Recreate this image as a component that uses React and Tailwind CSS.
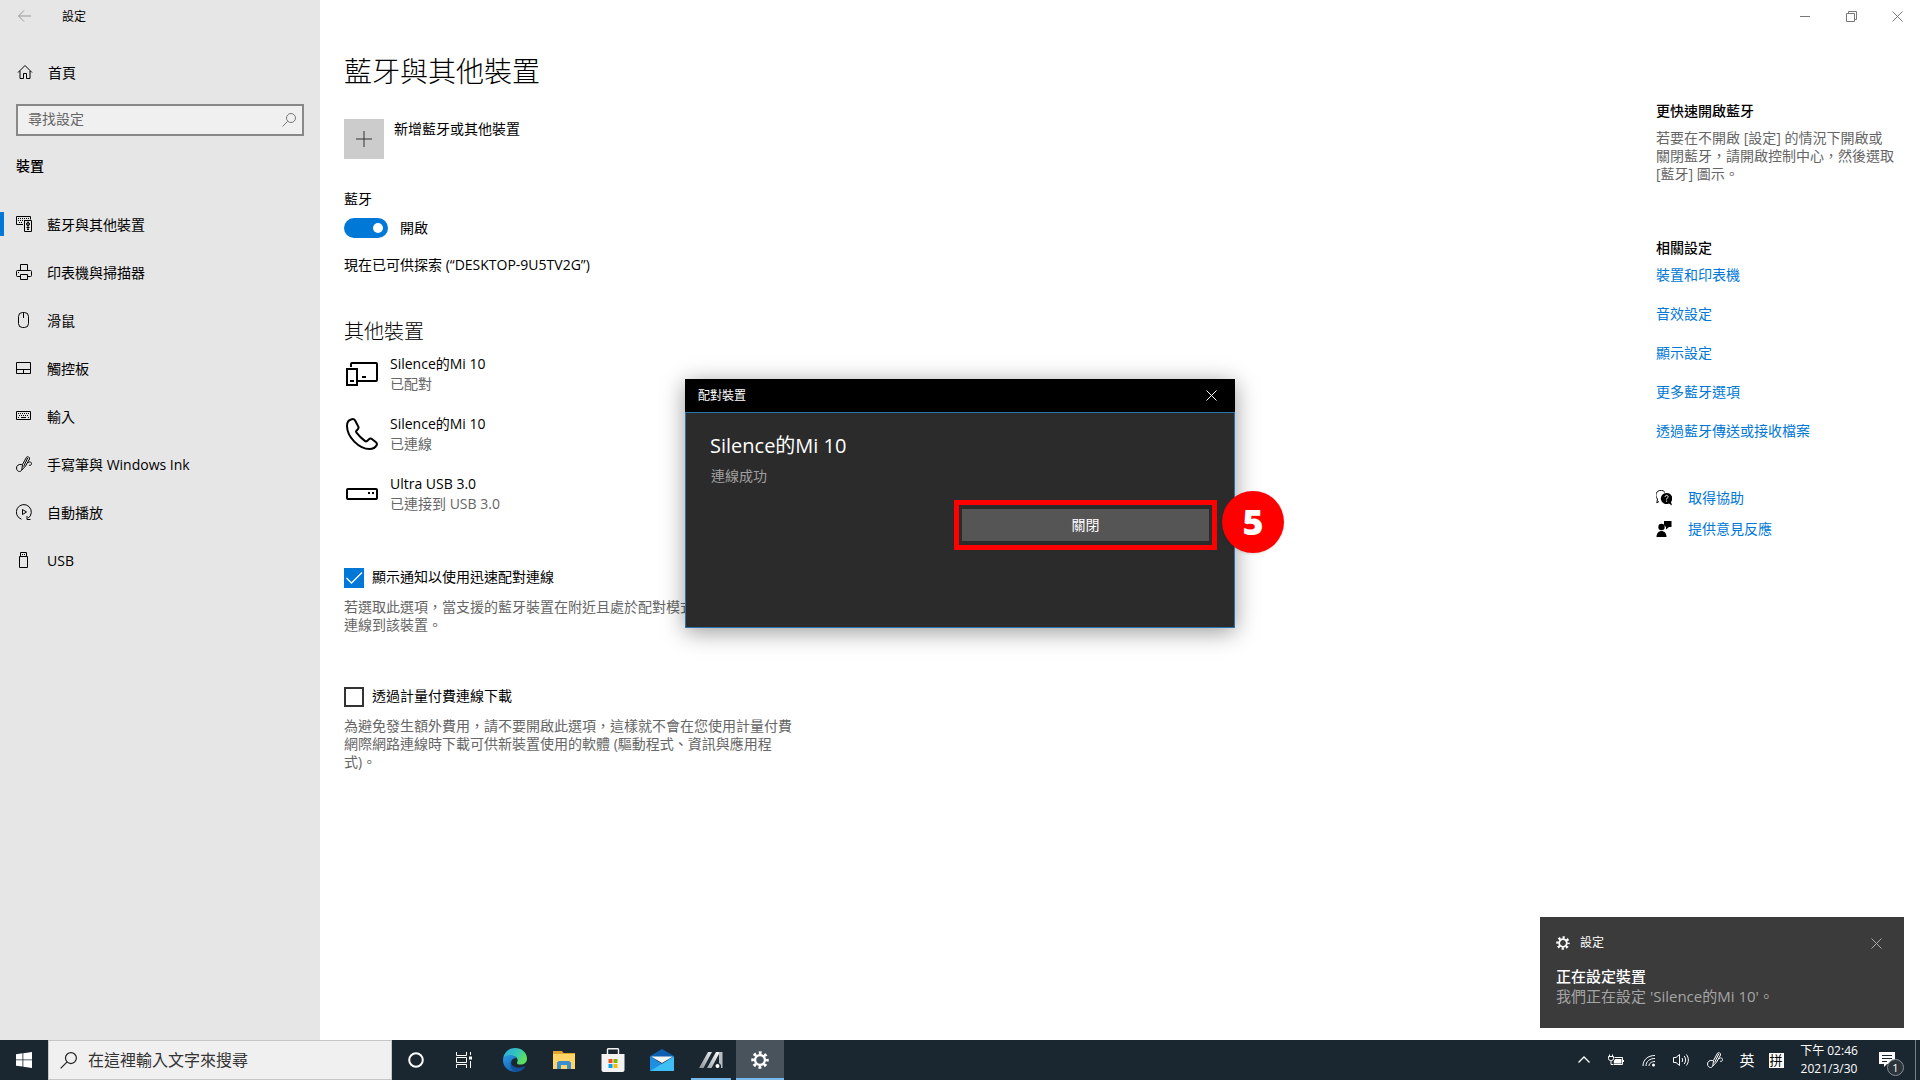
import { useState } from 'react'

const navItems = [
    { label: "藍牙與其他裝置", icon: DevicesIcon },
    { label: "印表機與掃描器", icon: PrinterIcon },
    { label: "滑鼠", icon: MouseIcon },
    { label: "觸控板", icon: TouchpadIcon },
    { label: "輸入", icon: KeyboardIcon },
    { label: "手寫筆與 Windows Ink", icon: PenIcon },
    { label: "自動播放", icon: AutoPlayIcon },
    { label: "USB", icon: UsbIcon },
];

const devices = [
    { name: "Silence的Mi 10", status: "已配對", icon: ScreensIcon },
    { name: "Silence的Mi 10", status: "已連線", icon: PhoneIcon },
    { name: "Ultra USB 3.0", status: "已連接到 USB 3.0", icon: DriveIcon },
];

const relatedLinks = ["裝置和印表機", "音效設定", "顯示設定", "更多藍牙選項", "透過藍牙傳送或接收檔案"];

function Icon({ size = 16, children, ...rest }) {
    return (
        <svg width={size} height={size} viewBox={`0 0 ${size} ${size}`} fill="none" stroke="currentColor" className="shrink-0" aria-hidden="true" {...rest}>
            {children}
        </svg>
    );
}

function DevicesIcon() {
    return (
        <Icon>
            <path d="M7 8.5H.5v-8h14v3" />
            <path d="M2 2.5h11M2 4.5h7M3 6.5h4" strokeDasharray="1 1" />
            <path d="M8.5 4.5h7v11h-7z" />
            <circle cx="12" cy="8" r="1.5" />
            <path d="M12 5.5v8M10.5 11.5h3M11 13.5h2" />
        </Icon>
    );
}

function PrinterIcon() {
    return (
        <Icon>
            <path d="M4.5 6V.5h7V6M4.5 12.500h-3a1 1 0 0 1-1-1V7.500a1 1 0 0 1 1-1h13a1 1 0 0 1 1 1v4a1 1 0 0 1-1 1h-3M4.500 10.500h7v5h-7z" />
            <path d="M2 8.500h1" />
        </Icon>
    );
}

function MouseIcon() {
    return (
        <Icon>
            <rect x="2.500" y=".5" width="10" height="15" rx="4" />
            <path d="M7.500 1v5" />
        </Icon>
    );
}

function TouchpadIcon() {
    return (
        <Icon>
            <path d="M.5 2.500h14v11H.5zM.5 9.500h14M7.500 9.500v4" />
        </Icon>
    );
}

function KeyboardIcon() {
    return (
        <Icon>
            <path d="M.5 3.500h14v8H.5z" />
            <path d="M2 5.500h11M3 7.500h10" strokeDasharray="1 1" />
            <path d="M2 9.500h1M5 9.500h5M12 9.500h1" />
        </Icon>
    );
}

function PenIcon() {
    return (
        <Icon>
            <path d="M10.500 1.200 6.500 8.500 5.800 14l3.800-4L13.500 3c.5-2-2-3-3-1.800zM11.800 1.800 7.600 10.500" />
            <path d="M5.800 8.500c-3-.6-5.300 1-5.300 3.500 0 2 1.400 3.500 3 3.500 1.200 0 2-.7 2.300-1.700M12 7c1.500-2 3.500-1 3.500.8 0 1.200-1.500 2.200-2.500 1.200" />
        </Icon>
    );
}

function AutoPlayIcon() {
    return (
        <Icon>
            <path d="M5.500 15.200A7.500 7.500 0 1 1 12 14.300M14.500 15.500h-3.500v-3.500" />
            <path d="M6.500 5.500v5l4-2.500z" />
        </Icon>
    );
}

function UsbIcon() {
    return (
        <Icon>
            <path d="M3.500 4.500h8v11h-8zM4.500 4.500v-4h6v4" />
            <path d="M6 2.500h1M8 2.500h1" />
        </Icon>
    );
}

function ScreensIcon() {
    return (
        <Icon size={32} strokeWidth="2">
            <path d="M5 9V6a1 1 0 0 1 1-1h24a1 1 0 0 1 1 1v16a1 1 0 0 1-1 1H12" />
            <path d="M1 11h10v16H1zM4 23h4M16 19h4" />
        </Icon>
    );
}

function PhoneIcon() {
    return (
        <Icon size={32} strokeWidth="2">
            <path d="M5 1.500C3 2 1 4.500 1 8c0 11 12 23 22.500 23 3.500 0 6-1.600 7.200-4 .5-1.200.3-2-.7-2.800l-3.800-3c-1.200-.9-2.400-.8-3.500.2l-1.600 1.500c-.8.7-1.500.6-2.300 0-3-2.200-6-5.200-8.300-8.200-.7-.9-.6-1.500.1-2.200l1-1c1-1 1.200-2.300.4-3.500L9 2.300C8.200 1.100 6.500.9 5 1.500z" />
        </Icon>
    );
}

function DriveIcon() {
    return (
        <Icon size={32} strokeWidth="2">
            <rect x="1" y="11" width="30" height="10" rx="1" />
            <path d="M22 15h2M26 15h2" />
        </Icon>
    );
}

function CloseIcon({ size = 11 }) {
    return (
        <Icon size={size} viewBox="0 0 11 11">
            <path d="m.5.5 10 10m0-10-10 10" />
        </Icon>
    );
}

function SearchIcon({ size = 14 }) {
    return (
        <Icon size={size} viewBox="0 0 14 14">
            <circle cx="9" cy="5" r="4.500" />
            <path d="M5.700 8.300.5 13.500" />
        </Icon>
    );
}

function GearIcon({ size = 14 }) {
    return (
        <Icon size={size} viewBox="0 0 20 20">
            <circle cx="10" cy="10" r="5.500" strokeWidth="2.600" />
            <circle cx="10" cy="10" r="8" strokeWidth="3.400" strokeDasharray="3.140 3.140" strokeDashoffset="1.570" />
        </Icon>
    );
}

function Sidebar() {
    return (
        <aside className="w-80 shrink-0 bg-[#e6e6e6]">
            <div className="flex h-8 items-center pl-4">
                <button className="w-[46px] pl-px text-[#999]" aria-label="返回">
                    <Icon>
                        <path d="M14 8H1.500M7 2.500 1.500 8 7 13.500" />
                    </Icon>
                </button>
                <span className="pt-0.5 text-xs">設定</span>
            </div>
            <a href="#home" className="mt-5 flex h-10 items-center gap-[15px] pl-[17px]">
                <Icon>
                    <path d="M1 8.500 8 1.500l7 7M3 7v7.500h3.500v-5h3v5H13V7" />
                </Icon>
                <span className="pt-px">首頁</span>
            </a>
            <div className="mx-4 mt-3 flex h-8 items-center border-2 border-[#888] bg-[#f0f0f0] pr-1.5 pl-[10px] text-[#777]">
                <input type="text" placeholder="尋找設定" aria-label="尋找設定" className="min-w-0 flex-1 pb-0.5 outline-none placeholder:text-[#666]" />
                <SearchIcon />
            </div>
            <h2 className="mt-5 pl-4 font-medium">裝置</h2>
            <nav className="mt-6">
                {navItems.map((item, i) => (
                    <a key={item.label} href="#nav" className="flex h-12 items-center">
                        <span className={i === 0 ? "h-6 w-1 bg-[#0078d7]" : "h-6 w-1"} />
                        <span className="mr-[15px] ml-3">
                            <item.icon />
                        </span>
                        <span className="pt-0.5">{item.label}</span>
                    </a>
                ))}
            </nav>
        </aside>
    );
}

function CheckOption({ label, defaultChecked, children }) {
    return (
        <div className="w-[456px]">
            <label className="flex items-center gap-2">
                <span className="grid">
                    <input
                        type="checkbox"
                        defaultChecked={defaultChecked}
                        className="peer col-start-1 row-start-1 size-5 appearance-none border-2 border-[#333] checked:border-[#0078d7] checked:bg-[#0078d7]"
                    />
                    <svg width="20" height="20" fill="none" stroke="white" strokeWidth="1.300" className="pointer-events-none invisible col-start-1 row-start-1 peer-checked:visible">
                        <path d="m2.500 10 5 5L18 4.500" />
                    </svg>
                </span>
                <span className="pb-0.5 leading-[18px]">{label}</span>
            </label>
            <p className="mt-[10px] leading-[18px] text-[#666]">{children}</p>
        </div>
    );
}

function MainContent() {
    const [bluetooth, setBluetooth] = useState(true);

    return (
        <main className="flex-1 pt-[53px] pl-6">
            <h1 className="text-[28px] leading-9 font-light">藍牙與其他裝置</h1>
            <button className="mt-[30px] flex gap-[10px]">
                <span className="flex size-10 items-center justify-center bg-[#ccc] text-[#333]">
                    <Icon>
                        <path d="M8 0v16M0 8h16" />
                    </Icon>
                </span>
                新增藍牙或其他裝置
            </button>

            <p className="mt-[30px]">藍牙</p>
            <label className="mt-[9px] flex items-center gap-3">
                <span className="grid items-center">
                    <input
                        type="checkbox"
                        role="switch"
                        checked={bluetooth}
                        onChange={() => setBluetooth(!bluetooth)}
                        className="peer col-start-1 row-start-1 h-5 w-11 appearance-none rounded-full bg-[#777] checked:bg-[#0078d7]"
                    />
                    <span className="pointer-events-none col-start-1 row-start-1 ml-[5px] size-[10px] rounded-full bg-white peer-checked:ml-[29px]" />
                </span>
                開啟
            </label>
            <p className="mt-[17px]">現在已可供探索 (“DESKTOP-9U5TV2G”)</p>

            <h2 className="mt-[43px] text-xl leading-7 font-light">其他裝置</h2>
            <ul className="mt-2 flex flex-col gap-5">
                {devices.map((device, i) => (
                    <li key={i} className="flex items-center gap-3 pl-0.5">
                        <device.icon />
                        <div>
                            <p>{device.name}</p>
                            <p className="text-[#666]">{device.status}</p>
                        </div>
                    </li>
                ))}
            </ul>

            <div className="mt-[54px] flex flex-col gap-[53px]">
                <CheckOption label="顯示通知以使用迅速配對連線" defaultChecked>
                    若選取此選項，當支援的藍牙裝置在附近且處於配對模式時，您可以快速連線到該裝置。
                </CheckOption>
                <CheckOption label="透過計量付費連線下載">
                    為避免發生額外費用，請不要開啟此選項，這樣就不會在您使用計量付費網際網路連線時下載可供新裝置使用的軟體 (驅動程式、資訊與應用程式)。
                </CheckOption>
            </div>
        </main>
    );
}

function RelatedPanel() {
    return (
        <aside className="w-[264px] shrink-0">
            <div className="flex justify-end text-[#777]">
                <button className="flex h-8 w-[46px] items-center justify-center" aria-label="最小化">
                    <Icon size={11}><path d="M0 5.500h10" /></Icon>
                </button>
                <button className="flex h-8 w-[46px] items-center justify-center" aria-label="還原">
                    <Icon size={11}><path d="M.5 2.500h8v8h-8zM2.500 2.500v-2h8v8h-2" /></Icon>
                </button>
                <button className="flex h-8 w-[46px] items-center justify-center" aria-label="關閉視窗">
                    <CloseIcon />
                </button>
            </div>
            <h3 className="mt-[69px] font-medium">更快速開啟藍牙</h3>
            <p className="mt-2 w-60 leading-[18px] text-[#666]">
                若要在不開啟 [設定] 的情況下開啟或關閉藍牙，請開啟控制中心，然後選取 [藍牙] 圖示。
            </p>
            <h3 className="mt-[55px] font-medium">相關設定</h3>
            <ul className="mt-[7px] flex flex-col gap-[19px] text-[#0078d7]">
                {relatedLinks.map((link) => (
                    <li key={link}>
                        <a href="#related">{link}</a>
                    </li>
                ))}
            </ul>
            <a href="#help" className="mt-[47px] flex items-center gap-4 text-[#0078d7]">
                <Icon className="text-black">
                    <path d="M3 11.500.8 12.800 1.500 9A5 5 0 1 1 9 2.500" />
                    <path d="M10.500 3a5.500 5.500 0 1 0 2.300 10.400L16 15.500l-1-3.500A5.500 5.500 0 0 0 10.500 3z" fill="currentColor" stroke="none" />
                    <path d="M9 7c0-2.200 3.200-2 3.200-.2 0 1.200-1.600 1.200-1.600 2.700M10.600 10.500v1.200" stroke="white" />
                </Icon>
                取得協助
            </a>
            <a href="#feedback" className="mt-[11px] flex items-center gap-4 text-[#0078d7]">
                <Icon className="text-black" fill="currentColor" stroke="none">
                    <path d="M8 0h7.500v6H13l-3 2.500V6L8 4z" />
                    <circle cx="5.500" cy="6" r="3.200" />
                    <path d="M.5 16c0-8 10-8 10 0z" />
                </Icon>
                提供意見反應
            </a>
        </aside>
    );
}

function PairDialog() {
    return (
        <div className="absolute inset-x-0 top-[379px] flex justify-center">
            <div role="dialog" aria-label="配對裝置" className="relative h-[249px] w-[550px] bg-[#2b2b2b] text-white shadow-[0_4px_22px_rgba(0,0,0,0.4)]">
                <div className="flex h-[33px] items-center justify-between bg-black pr-[18px] pl-[13px] text-xs">
                    配對裝置
                    <button aria-label="關閉對話方塊"><CloseIcon /></button>
                </div>
                <div className="h-[216px] border border-[#2a74ad] pt-[19px] pl-6">
                    <h2 className="text-xl leading-7">Silence的Mi 10</h2>
                    <p className="mt-1.5 pl-px text-[#a0a0a0]">連線成功</p>
                </div>
                <div className="absolute top-[121px] right-[18px] flex h-[50px] w-[263px] border-5 border-[#ff0000] px-[3px] py-1">
                    <button className="flex-1 bg-[#555]">關閉</button>
                </div>
                <span className="absolute top-[112px] -right-[49px] flex size-[62px] items-center justify-center rounded-full bg-[#ff0000] font-['Noto_Sans'] text-[36px] font-black shadow-sm">
                    5
                </span>
            </div>
        </div>
    );
}

function Toast() {
    return (
        <div role="status" className="absolute right-4 bottom-[52px] h-[111px] w-[364px] bg-[#3b3b3b] px-4 pt-[18px] text-white">
            <div className="flex items-center gap-[10px] text-xs">
                <GearIcon />
                設定
                <button className="mr-1.5 ml-auto text-[#aaa]" aria-label="關閉通知"><CloseIcon /></button>
            </div>
            <div className="mt-[15px] text-[15px]">
                <p className="font-medium">正在設定裝置</p>
                <p className="text-[#a5a5a5]">我們正在設定 'Silence的Mi 10'。</p>
            </div>
        </div>
    );
}

function EdgeIcon() {
    return (
        <svg width="24" height="24" viewBox="0 0 24 24">
            <defs>
                <linearGradient id="edgeTop" x1="0" y1="0" x2="1" y2="0.500">
                    <stop offset="0" stopColor="#2aa4e8" />
                    <stop offset="0.600" stopColor="#35c8b8" />
                    <stop offset="1" stopColor="#5fe05a" />
                </linearGradient>
                <linearGradient id="edgeSide" x1="0" y1="0" x2="0.600" y2="1">
                    <stop offset="0" stopColor="#2a9be6" />
                    <stop offset="1" stopColor="#1464b4" />
                </linearGradient>
            </defs>
            <path d="M0 11C1 4 6 0 12 0c7 0 12 5 12 10.500 0 4-3 6-6.500 6-2.500 0-4-1-3.500-2 1.500-2.500.5-6-4-6.500C6 7.500 1.500 8 0 11z" fill="url(#edgeTop)" />
            <path d="M0 12C0 8.500 4 7 8 7.200c3 .2 5 1.600 5.500 3.300-2-.8-5 .5-5.500 4-.4 4 2.500 8 6.500 9.200C6 25 0 19 0 12z" fill="url(#edgeSide)" />
            <path d="M8.300 13c-1.300 4 4.200 9.500 14.200 5-2 4-5.500 5.600-8 5.800-5 .2-8.500-5-6.200-10.800z" fill="#10529c" />
        </svg>
    );
}

function ExplorerIcon() {
    return (
        <svg width="22" height="18" viewBox="0 0 22 18">
            <path d="M0 0h9l1.500 2H22v16H0z" fill="#e0a72e" />
            <path d="M0 3h22v15H0z" fill="#ffd568" />
            <path d="M4 18v-6.500L6 10h10l2 1.500V18h-4v-4H8v4z" fill="#3a8ed0" />
        </svg>
    );
}

function StoreIcon() {
    return (
        <svg width="24" height="24" viewBox="0 0 24 24">
            <path d="M6.500 7V1.500A1 1 0 0 1 7.500.7h9a1 1 0 0 1 1 .8V7" fill="none" stroke="#f3f3f3" strokeWidth="1.400" />
            <path d="M.5 6h23v16a2 2 0 0 1-2 2h-19a2 2 0 0 1-2-2z" fill="#f3f3f3" />
            <path d="M7.500 11h4v4h-4z" fill="#f25022" />
            <path d="M12.500 11h4v4h-4z" fill="#7fba00" />
            <path d="M7.500 16h4v4h-4z" fill="#00a4ef" />
            <path d="M12.500 16h4v4h-4z" fill="#ffb900" />
        </svg>
    );
}

function MailIcon() {
    return (
        <svg width="24" height="22" viewBox="0 0 24 22">
            <path d="M0 7 12 0l12 7v4H0z" fill="#0f5fb0" />
            <path d="M0 7.500 24 22H0z" fill="#1e8fe0" />
            <path d="M0 22 24 7.500V22z" fill="#3dbef5" />
            <path d="M1 7.500h22L12 14z" fill="#f4f4f4" />
        </svg>
    );
}

function StripesIcon() {
    return (
        <svg width="24" height="18" viewBox="0 0 24 18">
            <defs>
                <linearGradient id="stripes" x1="1" y1="0" x2="0" y2="1">
                    <stop offset="0" stopColor="#fff" />
                    <stop offset="1" stopColor="#8b9298" />
                </linearGradient>
            </defs>
            <path d="M9 1h4L4.500 17H0zM17 1h4l-8.500 16H8z" fill="url(#stripes)" />
            <path d="M20 2.500 21 1h2.500v16H22V14l-2-2z" fill="#b7bcc0" />
            <circle cx="18.500" cy="15" r="2" fill="#fff" />
        </svg>
    );
}

function TaskButton({ label, className = "w-12", children }) {
    return (
        <button aria-label={label} className={`flex h-full items-center justify-center ${className}`}>
            {children}
        </button>
    );
}

function Taskbar() {
    return (
        <footer className="flex h-10 items-stretch bg-[#1a2630] text-white">
            <TaskButton label="開始">
                <svg width="16" height="16" viewBox="0 0 16 16" fill="white">
                    <path d="M0 2.200 6.500 1.300v6.200H0zM7.300 1.200 16 0v7.500H7.300zM0 8.300h6.500v6.300L0 13.700zM7.300 8.300H16V16l-8.700-1.200z" />
                </svg>
            </TaskButton>
            <div className="flex w-[344px] items-center gap-[11px] border border-[#c6c6c6] bg-[#f0f0f0] pl-[11px] text-base text-[#222]">
                <SearchIcon size={17} />
                <input type="text" placeholder="在這裡輸入文字來搜尋" aria-label="搜尋" className="min-w-0 flex-1 outline-none placeholder:text-[#333]" />
            </div>
            <TaskButton label="Cortana">
                <Icon strokeWidth="2"><circle cx="8" cy="8" r="6.800" /></Icon>
            </TaskButton>
            <TaskButton label="工作檢視">
                <Icon>
                    <path d="M.5 0v3.500h10V0M.5 5.500h10v5H.5zM.5 16v-3.500h10V16M14.500 0v3M14.500 9v7" />
                    <path d="M13 4.500h3v3h-3z" fill="currentColor" stroke="none" />
                </Icon>
            </TaskButton>
            <TaskButton label="Microsoft Edge" className="ml-[3px] w-12"><EdgeIcon /></TaskButton>
            <TaskButton label="檔案總管" className="w-[50px]"><ExplorerIcon /></TaskButton>
            <TaskButton label="Microsoft Store"><StoreIcon /></TaskButton>
            <TaskButton label="郵件" className="w-[50px]"><MailIcon /></TaskButton>
            <TaskButton label="應用程式" className="ml-1 w-10 border-b-2 border-[#76b9ed] pt-0.5"><StripesIcon /></TaskButton>
            <TaskButton label="設定" className="ml-[5px] w-12 border-b-2 border-[#76b9ed] bg-[#48535c] pt-0.5">
                <GearIcon size={18} />
            </TaskButton>

            <div className="ml-auto flex items-center">
                <TaskButton label="顯示隱藏的圖示" className="w-8">
                    <Icon size={12}><path d="m.5 8.500 5.500-5.500 5.500 5.500" strokeWidth="1.300" /></Icon>
                </TaskButton>
                <TaskButton label="電源" className="w-8">
                    <Icon>
                        <path d="M5.500 12.500h9v-7h-8M15.500 8v2" />
                        <path d="M7 7h6.500v4.500H5.800V9z" fill="currentColor" stroke="none" />
                        <path d="M1.500 2.500v2M4.500 2.500v2M.5 4.500h5v2a2 2 0 0 1-2 2h-1a2 2 0 0 1-2-2zM3 8.500v4h2" />
                    </Icon>
                </TaskButton>
                <TaskButton label="網路" className="w-[33px]">
                    <Icon>
                        <path d="M2 14C2 8 6.500 3.500 14 3.500M5 14c0-4.500 3.500-7.500 9-7.500M8 14c0-2.800 2.500-4.500 6-4.500" />
                        <circle cx="12.500" cy="13" r="1.500" fill="currentColor" stroke="none" />
                    </Icon>
                </TaskButton>
                <TaskButton label="音量" className="w-8">
                    <Icon>
                        <path d="M.5 5.500v5H3l3.500 3v-11L3 5.500zM9 6c.8 1.300.8 2.700 0 4M11.200 4c1.900 2.500 1.900 5.500 0 8M13.400 2.500c2.600 3.500 2.600 7.500 0 11" />
                    </Icon>
                </TaskButton>
                <TaskButton label="筆跡工作區" className="w-9"><PenIcon /></TaskButton>
                <TaskButton label="輸入語言" className="w-7 text-[15px]">英</TaskButton>
                <TaskButton label="輸入法" className="w-[30px]">
                    <span className="size-[15px] bg-white text-center text-[13px] leading-[15px] text-black">拼</span>
                </TaskButton>
                <time className="w-[76px] text-center text-xs leading-[18px]">
                    下午 02:46<br />2021/3/30
                </time>
                <TaskButton label="通知" className="relative w-12 pr-2">
                    <Icon>
                        <path d="M0 0h16v12H8l-3 3v-3H0z" fill="currentColor" stroke="none" />
                        <path d="M3 3.500h10M3 6.500h10M3 9.500h5" stroke="#1a2630" />
                    </Icon>
                    <span className="absolute top-[19px] left-5 size-[17px] rounded-full border border-[#8a8f94] bg-[#2b333b] text-[11px] leading-[15px]">1</span>
                </TaskButton>
                <span className="mr-1 h-full w-px bg-[#76808a]" />
            </div>
        </footer>
    );
}

export default function App() {
    return (
        <div className="relative flex min-h-screen flex-col bg-white font-['Open_Sans','Noto_Sans_CJK_TC',sans-serif] text-sm leading-5 text-black" lang="zh-Hant">
            <div className="flex flex-1">
                <Sidebar />
                <MainContent />
                <RelatedPanel />
            </div>
            <Taskbar />
            <PairDialog />
            <Toast />
        </div>
    );
}
